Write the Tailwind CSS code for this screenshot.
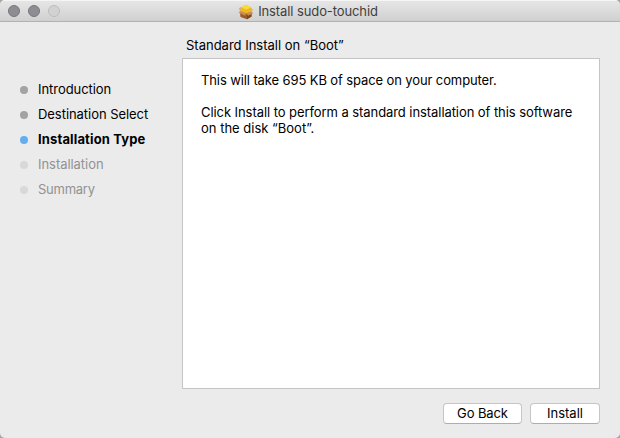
<!DOCTYPE html>
<html lang="en">
<head>
<meta charset="utf-8">
<title>Install sudo-touchid</title>
<script src="https://cdn.jsdelivr.net/npm/@tailwindcss/browser@4"></script>
</head>
<body class="bg-[#a5a5a5] font-['Inter',sans-serif] text-[13px] leading-4 text-black">
<div class="flex h-[438px] w-[620px] flex-col overflow-hidden rounded-[5px] bg-[#ebebeb]">
  <header class="relative flex h-[22px] shrink-0 items-center justify-center border-t border-b border-t-[#f5f5f5] border-b-[#b1b1b1] bg-linear-to-b from-[#e6e6e6] to-[#d0d0d0]">
    <div class="absolute top-1 left-2 flex gap-2">
      <span class="size-3 rounded-full border border-[#77777b] bg-[#8e8d92]"></span>
      <span class="size-3 rounded-full border border-[#77777b] bg-[#8e8d92]"></span>
      <span class="size-3 rounded-full border border-[#bcbcbc] bg-[#d2d2d2]"></span>
    </div>
    <div class="flex items-center gap-1 pr-1">
      <svg class="mt-px size-4" viewBox="0 0 16 16">
        <path d="M2 8.500h11.500v4L9 15.300 2.500 13z" fill="#98592b"/>
        <path d="M9 10l4.500-2v4.500L9 15.300z" fill="#7c4822"/>
        <path d="M.8 4.300 4 2.500v5L2 7zM15.200 6 12.300 3l-.8 5 1.500-.3z" fill="#e0ad7c"/>
        <path d="M3 3.500 8 .8l5 2.700-.5 4.500L8.500 9.500 2.700 7.500z" fill="#eebb18"/>
        <path d="M3.300 3.400 8 .8l4.700 2.700-4.200 2z" fill="#f9dc3c"/>
        <path d="M2.200 7 .6 8.800l6.400 3L8.500 9.200zM13.500 7.500l1.700 1.800-5.200 2.500-1.500-2.600z" fill="#cb8c54"/>
      </svg>
      <h1 class="-mt-px tracking-[-0.1px] text-[#3f3f3f]">Install sudo-touchid</h1>
    </div>
  </header>
  <div class="flex min-h-0 flex-1">
    <nav class="w-[182px] shrink-0 pt-[54px] pl-5 tracking-[-0.05px]">
      <ol>
        <li class="flex h-[25px] items-center gap-[10px]"><i class="mt-[3px] size-2 rounded-full bg-[#a3a3a3]"></i><span>Introduction</span></li>
        <li class="flex h-[25px] items-center gap-[10px]"><i class="mt-[3px] size-2 rounded-full bg-[#a3a3a3]"></i><span>Destination Select</span></li>
        <li class="flex h-[25px] items-center gap-[10px]"><i class="mt-[3px] size-2 rounded-full bg-[#64aef0]"></i><span class="font-bold tracking-[0.14px]">Installation Type</span></li>
        <li class="flex h-[25px] items-center gap-[10px] text-[#929292]"><i class="mt-[3px] size-2 rounded-full bg-[#d8d8d8]"></i><span>Installation</span></li>
        <li class="flex h-[25px] items-center gap-[10px] text-[#929292]"><i class="mt-[3px] size-2 rounded-full bg-[#d8d8d8]"></i><span class="tracking-[-0.25px]">Summary</span></li>
      </ol>
    </nav>
    <main class="flex w-[418px] flex-col pt-[15px]">
      <h2 class="pl-1">Standard Install on “Boot”</h2>
      <section class="mt-[5px] h-[331px] border border-[#c4c4c4] bg-white px-[18px] pt-[13px]">
        <p class="tracking-[-0.11px]">This will take 695 KB of space on your computer.</p>
        <p class="mt-4 whitespace-nowrap tracking-[-0.07px]">Click Install to perform a standard installation of this software<br><span class="tracking-normal">on the disk “Boot”.</span></p>
      </section>
      <div class="mt-[14px] flex justify-end gap-2">
        <button class="h-[21px] w-[79px] rounded-[4px] border border-[#c6c6c6] border-b-[#adadad] bg-white pb-[2px] tracking-[-0.1px]">Go Back</button>
        <button class="h-[21px] w-[70px] rounded-[4px] border border-[#c6c6c6] border-b-[#adadad] bg-white pb-[2px]">Install</button>
      </div>
    </main>
  </div>
</div>
</body>
</html>
